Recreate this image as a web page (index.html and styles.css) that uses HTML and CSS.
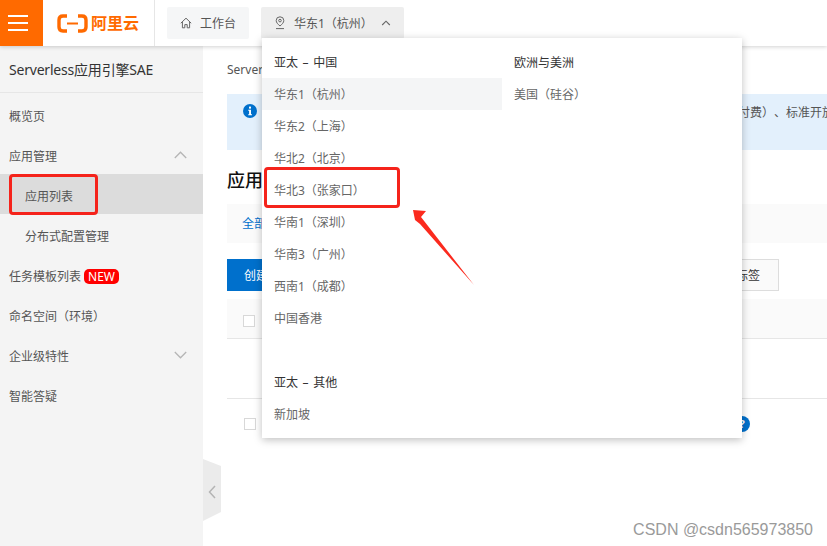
FILE: index.html
```html
<!DOCTYPE html>
<html lang="zh-CN">
<head>
  <meta charset="UTF-8">
  <title>应用列表</title>
  <link rel="stylesheet" href="styles.css">
</head>
<body>
  <header class="topbar">
    <div class="menu-btn"><span></span><span></span><span></span></div>
    <div class="logo">
      <svg width="31" height="19" viewBox="0 0 31 19">
        <path d="M10 2H6Q2 2 2 6V13Q2 17 6 17H10" fill="none" stroke="#ff6a00" stroke-width="3.4"/>
        <path d="M21 2H25Q29 2 29 6V13Q29 17 25 17H21" fill="none" stroke="#ff6a00" stroke-width="3.4"/>
        <rect x="10" y="8.5" width="11" height="2" fill="#ff6a00"/>
      </svg>
      <span class="logo-text">阿里云</span>
    </div>
    <div class="top-btn home-btn">
      <svg width="12" height="12" viewBox="0 0 12 12">
        <path d="M0.8 6.2L6 1.2L11.2 6.2M2.4 5V10.8H4.8V7.6H7.2V10.8H9.6V5" fill="none" stroke="#666" stroke-width="1"/>
      </svg>
      <span>工作台</span>
    </div>
    <div class="top-btn region-btn">
      <svg width="12" height="14" viewBox="0 0 12 14">
        <path d="M6 10C3.8 8.2 2.2 6.4 2.2 4.6A3.8 3.8 0 0 1 9.8 4.6C9.8 6.4 8.2 8.2 6 10Z" fill="none" stroke="#666"/>
        <circle cx="6" cy="4.6" r="1.3" fill="none" stroke="#666"/>
        <path d="M2 12.6H10" stroke="#666"/>
      </svg>
      <span>华东1（杭州）</span>
      <svg width="10" height="6" viewBox="0 0 10 6">
        <path d="M1.2 5L5 1.2L8.8 5" fill="none" stroke="#666" stroke-width="1.1"/>
      </svg>
    </div>
  </header>

  <div class="layout">
    <aside class="sidebar">
      <div class="side-title">Serverless应用引擎SAE</div>
      <div class="side-item">概览页</div>
      <div class="side-item">应用管理
        <svg width="13" height="8" viewBox="0 0 13 8"><path d="M0.8 7L6.5 1.2L12.2 7" fill="none" stroke="#b5b5b5" stroke-width="1.3"/></svg>
      </div>
      <div class="side-item sub active">应用列表</div>
      <div class="side-item sub">分布式配置管理</div>
      <div class="side-item"><span>任务模板列表<span class="badge-new">NEW</span></span></div>
      <div class="side-item">命名空间（环境）</div>
      <div class="side-item">企业级特性
        <svg width="13" height="8" viewBox="0 0 13 8"><path d="M0.8 1L6.5 6.8L12.2 1" fill="none" stroke="#b5b5b5" stroke-width="1.3"/></svg>
      </div>
      <div class="side-item">智能答疑</div>
    </aside>

    <main class="content">
      <div class="crumb">Serverless应用引擎 / 应用管理</div>
      <div class="notice">
        <svg class="notice-icon" width="14" height="14" viewBox="0 0 14 14">
          <circle cx="7" cy="7" r="7" fill="#0070cc"/>
          <rect x="6" y="2.6" width="2" height="2" fill="#fff"/>
          <path d="M5.2 5.8H8V10.2H9V11.2H5.2V10.2H6.1V6.8H5.2Z" fill="#fff"/>
        </svg>
        <span class="notice-text">欢迎您使用本服务，应用引擎提供多种规格的实例供您选择，计费方式包括按量计费（后付费）、标准开放接口</span>
      </div>
      <h2 class="page-title">应用列表</h2>
      <div class="tabs"><span>全部类型</span></div>
      <div class="toolbar">
        <button class="btn-create">创建应用</button>
        <button class="btn-tag">编辑标签</button>
      </div>
      <div class="table-head"><span class="check"></span></div>
      <div class="table-row"></div>
      <div class="table-row last">
        <span class="check"></span>
        <span class="help-dot">?</span>
      </div>
    </main>
  </div>

  <button class="collapse-tab">
    <svg width="8" height="14" viewBox="0 0 8 14"><path d="M7 1L1.5 7L7 13" fill="none" stroke="#b4b4b4" stroke-width="1.5"/></svg>
  </button>

  <div class="region-menu">
    <div class="region-col">
      <div class="region-group">亚太 – 中国</div>
      <div class="region-item current">华东1（杭州）</div>
      <div class="region-item">华东2（上海）</div>
      <div class="region-item">华北2（北京）</div>
      <div class="region-item">华北3（张家口）</div>
      <div class="region-item">华南1（深圳）</div>
      <div class="region-item">华南3（广州）</div>
      <div class="region-item">西南1（成都）</div>
      <div class="region-item">中国香港</div>
      <div class="region-item"></div>
      <div class="region-group">亚太 – 其他</div>
      <div class="region-item">新加坡</div>
    </div>
    <div class="region-col">
      <div class="region-group">欧洲与美洲</div>
      <div class="region-item">美国（硅谷）</div>
    </div>
  </div>

  <!-- screenshot annotations -->
  <div class="mark mark-list"></div>
  <div class="mark mark-region"></div>
  <svg class="arrow" width="64" height="78" viewBox="0 0 64 78">
    <path d="M1 1L14 2L9 8L62 76L8 15L3 11Z" fill="#fb2a1e"/>
  </svg>
  <div class="watermark">CSDN @csdn565973850</div>
</body>
</html>
```

FILE: styles.css
```css
html, body {
  margin: 0;
  height: 100%;
  overflow: hidden;
}

body {
  font-family: "Noto Sans", "Noto Sans CJK SC", sans-serif;
  font-size: 12px;
  color: #333;
  background: #fff;
}

/* top bar */
.topbar {
  display: flex;
  align-items: center;
  height: 46px;
  background: #fff;
  box-shadow: 0 1px 4px rgba(0,0,0,0.18);
  position: relative;
  z-index: 2;
}

.menu-btn {
  width: 43px;
  height: 46px;
  box-sizing: border-box;
  padding: 0 0 1px 8px;
  background: #ff6a00;
  display: flex;
  flex-direction: column;
  justify-content: center;
  gap: 5px;
}

.menu-btn span {
  display: block;
  width: 20px;
  height: 2px;
  background: #fff;
}

.logo {
  width: 112px;
  height: 46px;
  box-sizing: border-box;
  padding-left: 14px;
  display: flex;
  align-items: center;
  gap: 3px;
  border-right: 1px solid #e6e6e6;
}

.logo-text {
  color: #ff6a00;
  font-size: 16px;
  font-weight: 700;
  line-height: 1;
}

.top-btn {
  height: 32px;
  display: flex;
  align-items: center;
  color: #555;
  border-radius: 2px;
}

.home-btn {
  width: 82px;
  margin-left: 12px;
  padding-left: 13px;
  gap: 8px;
  box-sizing: border-box;
  background: #f5f6f7;
}

.region-btn {
  width: 143px;
  margin-left: 12px;
  padding-left: 13px;
  gap: 8px;
  box-sizing: border-box;
  background: #eee;
}

/* page */
.layout {
  display: flex;
  height: 500px;
}

.sidebar {
  width: 203px;
  flex-shrink: 0;
  background: #f4f4f4;
}

.side-title {
  height: 47px;
  box-sizing: border-box;
  padding-left: 9px;
  font-size: 14px;
  letter-spacing: -0.2px;
  line-height: 47px;
  border-bottom: 1px solid #e6e6e6;
  color: #333;
}

.side-item {
  height: 40px;
  box-sizing: border-box;
  display: flex;
  align-items: center;
  justify-content: space-between;
  padding: 4px 16px 0 9px;
  color: #555;
}

.side-item:nth-child(2) {
  margin-top: 1px;
}

.side-item svg {
  margin-bottom: 3px;
}

.side-item.sub {
  padding-left: 25px;
}

.side-item.active {
  background: #dcdcdc;
}

.badge-new {
  display: inline-block;
  margin-left: 3px;
  padding: 0 4px;
  height: 15px;
  line-height: 15px;
  background: #f00;
  color: #fff;
  border-radius: 5px;
}

.content {
  flex: 1;
  min-width: 0;
  padding-left: 24px;
  overflow: hidden;
}

.crumb {
  margin-top: 15px;
  height: 18px;
  line-height: 18px;
  color: #555;
  white-space: nowrap;
}

.notice {
  margin-top: 15px;
  height: 56px;
  background: #e3f0fc;
  display: flex;
  padding: 10px 0 0 16px;
  box-sizing: border-box;
  gap: 13px;
  white-space: nowrap;
  text-spacing-trim: space-all;
  color: #555;
}

.notice-icon {
  flex-shrink: 0;
}

.notice-text {
  line-height: 18px;
}

.page-title {
  margin: 18px 0 0;
  height: 24px;
  font-size: 18px;
  line-height: 24px;
  font-weight: 500;
  color: #111;
}

.tabs {
  margin-top: 12px;
  height: 39px;
  line-height: 39px;
  padding-left: 15px;
  background: #fafafa;
  color: #0070cc;
}

.toolbar {
  margin-top: 16px;
  display: flex;
  justify-content: space-between;
  padding-right: 48px;
}

.toolbar button {
  height: 32px;
  font: inherit;
  border-radius: 0;
}

.btn-create {
  width: 100px;
  background: #0070cc;
  color: #fff;
  border: none;
  text-align: left;
  padding-left: 17px;
}

.btn-tag {
  width: 100px;
  background: #fafafa;
  border: 1px solid #ddd;
  color: #333;
  text-align: right;
  padding-right: 18px;
}

.table-head {
  margin-top: 8px;
  height: 40px;
  box-sizing: border-box;
  background: #fafafa;
  border-bottom: 1px solid #e6e6e6;
  display: flex;
  align-items: center;
  padding: 4px 0 0 16px;
}

.check {
  width: 12px;
  height: 12px;
  border: 1px solid #d8d8d8;
  background: #fff;
  display: block;
  box-sizing: border-box;
}

.table-row {
  height: 59px;
  border-bottom: 1px solid #e6e6e6;
}

.table-row.last {
  height: 49px;
  border-bottom: none;
  display: flex;
  align-items: center;
  justify-content: space-between;
  padding: 0 77px 0 17px;
}

.help-dot {
  width: 16px;
  height: 16px;
  border-radius: 50%;
  background: #0070cc;
  color: #fff;
  font-size: 11px;
  font-weight: 700;
  line-height: 16px;
  text-align: center;
}

/* sidebar collapse handle */
.collapse-tab {
  position: absolute;
  left: 203px;
  top: 459px;
  width: 18px;
  height: 62px;
  display: flex;
  align-items: center;
  padding: 3px 0 0 5px;
  box-sizing: border-box;
  border: none;
  background: #ebebeb;
  clip-path: polygon(0 0, 100% 7px, 100% 53px, 0 100%);
}

/* region dropdown */
.region-menu {
  position: absolute;
  left: 262px;
  top: 38px;
  width: 480px;
  box-sizing: border-box;
  padding: 8px 0;
  background: #fff;
  display: flex;
  box-shadow: 0 2px 8px rgba(0,0,0,0.25);
  z-index: 3;
}

.region-col {
  width: 240px;
}

.region-group {
  height: 32px;
  line-height: 34px;
  padding-left: 12px;
  word-spacing: 1.5px;
  color: #333;
}

.region-item {
  height: 32px;
  line-height: 34px;
  padding-left: 12px;
  color: #666;
}

.region-item.current {
  background: #f4f5f6;
}

/* annotations drawn on top of the screenshot */
.mark {
  position: absolute;
  box-sizing: border-box;
  border: 3px solid #f5231b;
  border-radius: 4px;
  z-index: 4;
}

.mark-list {
  left: 9px;
  top: 174px;
  width: 89px;
  height: 41px;
}

.mark-region {
  left: 264px;
  top: 167px;
  width: 136px;
  height: 41px;
}

.arrow {
  position: absolute;
  left: 412px;
  top: 209px;
  z-index: 4;
}

.watermark {
  position: absolute;
  right: 14px;
  bottom: 7px;
  font-family: "Liberation Sans", sans-serif;
  font-size: 16px;
  color: #9a9a9a;
  z-index: 4;
}
```
